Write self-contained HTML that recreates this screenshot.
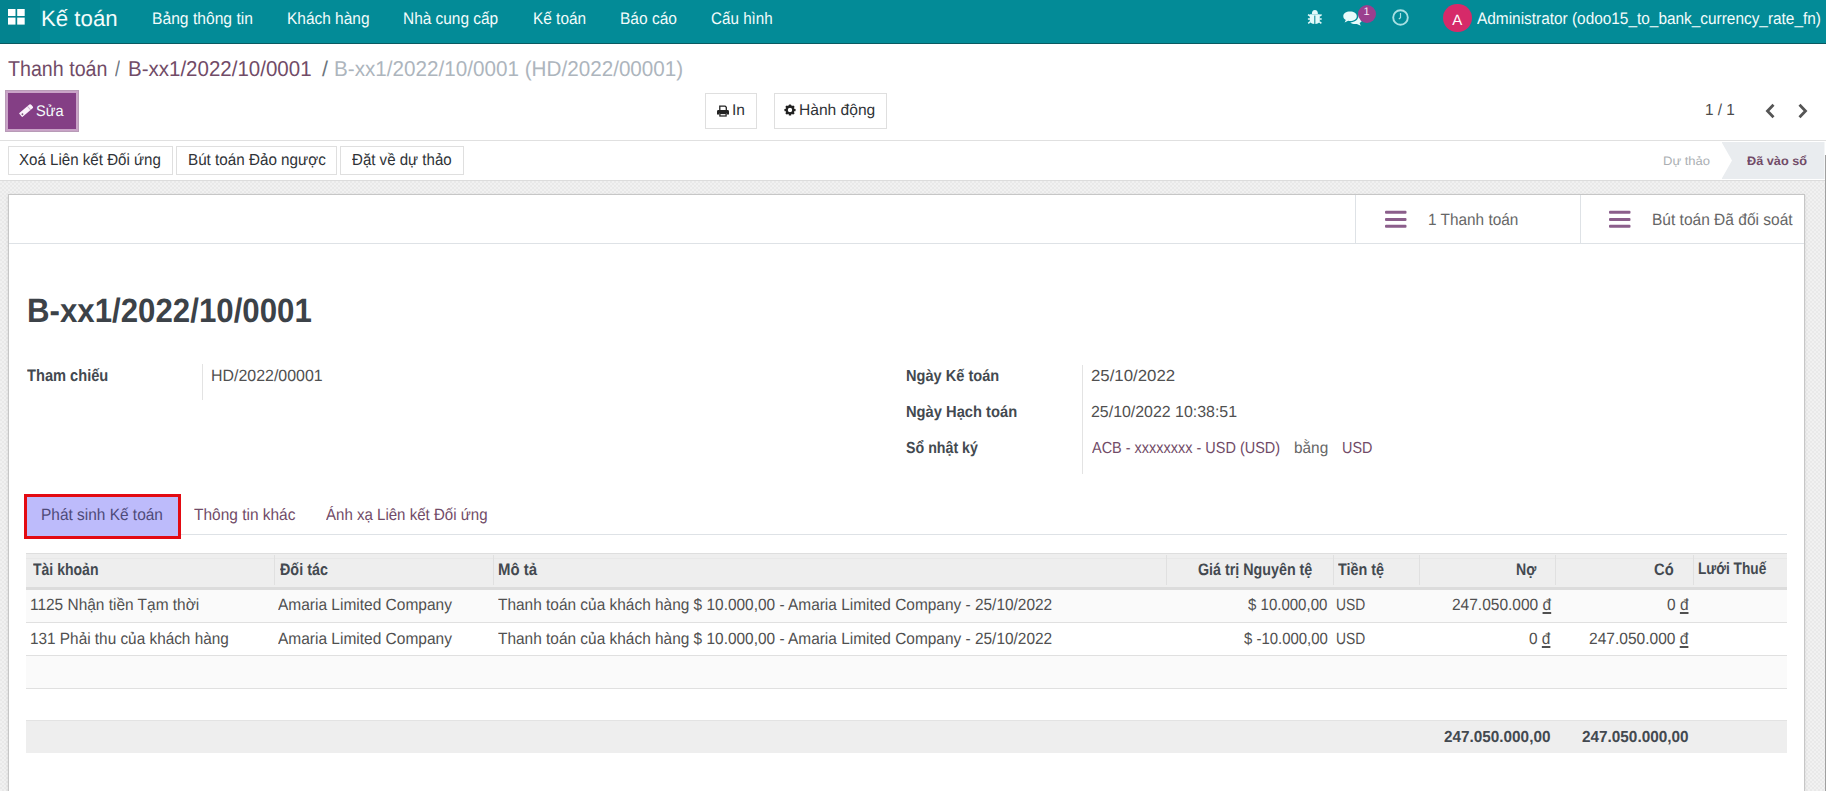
<!DOCTYPE html>
<html><head><meta charset="utf-8">
<style>
*{margin:0;padding:0;box-sizing:border-box}
html,body{width:1826px;height:791px;overflow:hidden;background:#fff;font-family:"Liberation Sans",sans-serif;color:#4c4c4c}
.a{position:absolute;white-space:nowrap;line-height:1;transform-origin:0 0;text-rendering:geometricPrecision}
.b{position:absolute}
.btn{position:absolute;border:1px solid #dfdfdf;background:#fff}
.bgpat{position:absolute;left:0;top:181px;width:1826px;height:610px;background-color:#f1f1f1;
 background-image:linear-gradient(45deg,#e9e9e9 25%,transparent 25%,transparent 75%,#e9e9e9 75%),linear-gradient(45deg,#e9e9e9 25%,transparent 25%,transparent 75%,#e9e9e9 75%);
 background-size:4px 4px;background-position:0 0,2px 2px}
</style></head><body>

<!-- NAVBAR -->
<div class="b" style="left:0;top:0;width:1826px;height:43px;background:#038b97"></div>
<div class="b" style="left:0;top:43px;width:1826px;height:1px;background:#0a5a61"></div>
<div class="b" style="left:0;top:0;width:40px;height:43px;background:#03838f"></div>
<svg class="b" style="left:8px;top:9px" width="17" height="16" viewBox="0 0 17 16"><rect x="0" y="0" width="7.5" height="7" fill="#fff"/><rect x="9.2" y="0" width="7.5" height="7" fill="#fff"/><rect x="0" y="8.6" width="7.5" height="7" fill="#fff"/><rect x="9.2" y="8.6" width="7.5" height="7" fill="#fff"/></svg>
<!-- bug -->
<svg class="b" style="left:1304px;top:6px" width="22" height="22" viewBox="0 0 22 22">
 <path d="M7.9 7.9 Q7.9 4.1 10.9 4.1 Q13.9 4.1 13.9 7.9 Z" fill="#e4fafa"/>
 <path d="M5.8 8.3 H15.8 V14.2 Q15.8 17.9 10.8 17.9 Q5.8 17.9 5.8 14.2 Z" fill="#e4fafa"/>
 <rect x="10.25" y="9.6" width="1.1" height="8.4" fill="#128e98"/>
 <path d="M4 8.6 L6.2 10 M17.6 8.6 L15.4 10 M3.9 12.9 H6 M17.7 12.9 H15.6 M4.2 17.4 L6.4 15.6 M17.4 17.4 L15.2 15.6" stroke="#e4fafa" stroke-width="1.5"/>
</svg>
<!-- comments -->
<svg class="b" style="left:1342.5px;top:10.5px" width="20" height="15" viewBox="0 0 20 15">
 <path d="M7 0.5 C3 0.5 0.3 2.6 0.3 5.2 C0.3 6.8 1.3 8.1 2.8 9 L1.6 11.6 L5.2 9.8 C5.8 9.9 6.4 10 7 10 C11 10 13.8 7.9 13.8 5.2 C13.8 2.6 11 0.5 7 0.5Z" fill="#e8fbfb"/>
 <path d="M15 4.3 C15.2 4.6 15.3 5 15.3 5.3 C15.3 8.7 11.9 11.3 7.3 11.4 C8.5 12.5 10.3 13.1 12.3 13.1 C12.9 13.1 13.4 13 13.9 12.9 L17.8 14.7 L16.6 12 C18.3 11.1 19.4 9.7 19.4 8.1 C19.4 6.5 17.6 5 15 4.3Z" fill="#e8fbfb"/>
</svg>
<div class="b" style="left:1357.5px;top:4.5px;width:18px;height:18px;border-radius:50%;background:#9a3f8e"></div>
<div class="a" style="left:1363.6px;top:6.6px;font-size:11px;color:#fbe9f7">1</div>
<!-- clock -->
<svg class="b" style="left:1392px;top:9px" width="17" height="17" viewBox="0 0 17 17">
 <circle cx="8.5" cy="8.5" r="7.3" fill="none" stroke="#a8e0e3" stroke-width="1.9"/>
 <path d="M8.5 4 V8.8 L6.8 10" fill="none" stroke="#a8e0e3" stroke-width="1.2"/>
</svg>
<!-- avatar -->
<div class="b" style="left:1443.3px;top:4.2px;width:28.5px;height:28px;border-radius:50%;background:#d62a69"></div>
<div class="a" style="left:1452.3px;top:12.6px;font-size:15px;color:#fff">A</div>

<!-- SỬA -->
<div class="b" style="left:5px;top:89.7px;width:74px;height:42px;background:#c9a3c7;border:0.6px solid #b89bb7"></div>
<div class="b" style="left:8px;top:93px;width:68px;height:36px;background:#843f85"></div>
<svg class="b" style="left:14px;top:98px" width="24" height="24" viewBox="0 0 24 24">
 <g transform="translate(12.2,12.5) rotate(-40.3)">
  <path d="M-7.4 -2 Q-7.4 -2.5 -6.8 -2.5 H6.3 Q7.6 -2.5 7.6 -1.2 V1.2 Q7.6 2.5 6.3 2.5 H-6.8 Q-7.4 2.5 -7.4 2 Z" fill="#fbf1fb"/>
  <rect x="3.3" y="-2.5" width="0.9" height="5" fill="#c7a9c7"/>
  <circle cx="-5.3" cy="0.4" r="0.95" fill="#7a5a7a"/>
 </g>
</svg>

<!-- In / Hành động -->
<div class="btn" style="left:705px;top:93px;width:52px;height:36px"></div>
<svg class="b" style="left:717px;top:104.5px" width="13" height="12" viewBox="0 0 13 12">
 <path d="M2.8 5.2 V1.05 H8.1 L9.3 2.25 V5.2" fill="none" stroke="#222" stroke-width="1.3"/>
 <path d="M1.4 5 H10.6 Q12 5 12 6.4 V9.4 H9.7 V8.1 H2.3 V9.4 H0 V6.4 Q0 5 1.4 5Z" fill="#222"/>
 <rect x="2.9" y="8.5" width="6.2" height="2.5" fill="none" stroke="#222" stroke-width="1.25"/>
</svg>
<div class="btn" style="left:773.5px;top:93px;width:113px;height:36px"></div>
<svg class="b" style="left:784px;top:104.3px" width="12" height="12" viewBox="-6 -6 12 12">
 <g fill="#222"><rect x="-1.3" y="-5.6" width="2.6" height="3" rx="0.9" transform="rotate(0)"/><rect x="-1.3" y="-5.6" width="2.6" height="3" rx="0.9" transform="rotate(45)"/><rect x="-1.3" y="-5.6" width="2.6" height="3" rx="0.9" transform="rotate(90)"/><rect x="-1.3" y="-5.6" width="2.6" height="3" rx="0.9" transform="rotate(135)"/><rect x="-1.3" y="-5.6" width="2.6" height="3" rx="0.9" transform="rotate(180)"/><rect x="-1.3" y="-5.6" width="2.6" height="3" rx="0.9" transform="rotate(225)"/><rect x="-1.3" y="-5.6" width="2.6" height="3" rx="0.9" transform="rotate(270)"/><rect x="-1.3" y="-5.6" width="2.6" height="3" rx="0.9" transform="rotate(315)"/></g>
 <circle cx="0" cy="0" r="3.3" fill="none" stroke="#222" stroke-width="2.2"/>
</svg>

<!-- pager arrows -->
<svg class="b" style="left:1764px;top:103px" width="12" height="16" viewBox="0 0 12 16">
 <path d="M9.5 1.8 L3.5 8 L9.5 14.2" fill="none" stroke="#555" stroke-width="2.8"/>
</svg>
<svg class="b" style="left:1797px;top:103px" width="12" height="16" viewBox="0 0 12 16">
 <path d="M2.5 1.8 L8.5 8 L2.5 14.2" fill="none" stroke="#555" stroke-width="2.8"/>
</svg>

<div class="b" style="left:0;top:140px;width:1826px;height:1px;background:#e0e0e0"></div>

<!-- STATUS BAR -->
<div class="btn" style="left:8px;top:146px;width:165px;height:29px"></div>
<div class="btn" style="left:176px;top:146px;width:161px;height:29px"></div>
<div class="btn" style="left:340px;top:146px;width:124px;height:29px"></div>
<div class="b" style="left:1721.5px;top:142px;width:103px;height:37px;background:#e9ecef;clip-path:polygon(0 0,100% 0,100% 100%,0 100%,10.5px 50%)"></div>
<div class="b" style="left:0;top:180px;width:1826px;height:1px;background:#dcdcdc"></div>

<div class="bgpat"></div>
<div class="b" style="left:1824.6px;top:155px;width:1.4px;height:636px;background:#a0a0a0"></div>

<!-- SHEET -->
<div class="b" style="left:8px;top:194px;width:1797px;height:620px;background:#fff;border:1px solid #c6c6c6;box-shadow:0 1px 3px rgba(0,0,0,.1)"></div>
<!-- button box -->
<div class="b" style="left:9px;top:243px;width:1795px;height:1px;background:#dee2e6"></div>
<div class="b" style="left:1355px;top:195px;width:1px;height:48px;background:#dee2e6"></div>
<div class="b" style="left:1580px;top:195px;width:1px;height:48px;background:#dee2e6"></div>
<svg class="b" style="left:1384.6px;top:210px" width="22" height="18" viewBox="0 0 22 18"><rect x="0" y="0.8" width="21.5" height="3" rx="1" fill="#8b5e8b"/><rect x="0" y="8" width="21.5" height="3" rx="1" fill="#8b5e8b"/><rect x="0" y="14.8" width="21.5" height="3" rx="1" fill="#8b5e8b"/></svg>
<svg class="b" style="left:1609.3px;top:210px" width="22" height="18" viewBox="0 0 22 18"><rect x="0" y="0.8" width="21.5" height="3" rx="1" fill="#8b5e8b"/><rect x="0" y="8" width="21.5" height="3" rx="1" fill="#8b5e8b"/><rect x="0" y="14.8" width="21.5" height="3" rx="1" fill="#8b5e8b"/></svg>

<!-- field separators -->
<div class="b" style="left:202px;top:364px;width:1px;height:36px;background:#e3e3e3"></div>
<div class="b" style="left:1082px;top:364.5px;width:1px;height:109.5px;background:#e3e3e3"></div>

<!-- tabs -->
<div class="b" style="left:180px;top:534px;width:1606.5px;height:1px;background:#dee2e6"></div>
<div class="b" style="left:24px;top:493.8px;width:156.5px;height:45.2px;background:#bdbbfb;border:3px solid #e30a12"></div>

<!-- table -->
<div class="b" style="left:26px;top:553px;width:1760.5px;height:36px;background:#eeeeee;border-top:1px solid #dedede"></div>
<div class="b" style="left:26px;top:557.5px;width:1760.5px;height:1px;background:#e8e8e8"></div>
<div class="b" style="left:26px;top:586.8px;width:1760.5px;height:2.8px;background:#dcdcdc"></div>
<div class="b" style="left:273.5px;top:555px;width:1px;height:30px;background:#e0e0e0"></div>
<div class="b" style="left:493.3px;top:555px;width:1px;height:30px;background:#e0e0e0"></div>
<div class="b" style="left:1166px;top:555px;width:1px;height:30px;background:#e0e0e0"></div>
<div class="b" style="left:1333px;top:555px;width:1px;height:30px;background:#e0e0e0"></div>
<div class="b" style="left:1418.5px;top:555px;width:1px;height:30px;background:#e0e0e0"></div>
<div class="b" style="left:1555px;top:555px;width:1px;height:30px;background:#e0e0e0"></div>
<div class="b" style="left:1693px;top:555px;width:1px;height:30px;background:#e0e0e0"></div>
<div class="b" style="left:26px;top:589.6px;width:1760.5px;height:32.6px;background:#fafafa"></div>
<div class="b" style="left:26px;top:622px;width:1760.5px;height:1px;background:#e0e0e0"></div>
<div class="b" style="left:26px;top:655.2px;width:1760.5px;height:1px;background:#e0e0e0"></div>
<div class="b" style="left:26px;top:656.2px;width:1760.5px;height:32px;background:#fafafa"></div>
<div class="b" style="left:26px;top:688.2px;width:1760.5px;height:1px;background:#e0e0e0"></div>
<div class="b" style="left:26px;top:720px;width:1760.5px;height:33px;background:#eeeeee;border-top:1px solid #e3e3e3"></div>

<div class="a" style="left:41.00px;top:7.50px;font-size:22.24px;font-weight:normal;color:#f4fcfc;">Kế toán</div>
<div class="a" style="left:151.66px;top:10.59px;font-size:16.72px;font-weight:normal;color:#f4fcfc;transform:scaleX(0.9368);">Bảng thông tin</div>
<div class="a" style="left:286.87px;top:10.59px;font-size:16.72px;font-weight:normal;color:#f4fcfc;transform:scaleX(0.9253);">Khách hàng</div>
<div class="a" style="left:403.38px;top:10.59px;font-size:16.72px;font-weight:normal;color:#f4fcfc;transform:scaleX(0.9235);">Nhà cung cấp</div>
<div class="a" style="left:533.08px;top:10.59px;font-size:16.72px;font-weight:normal;color:#f4fcfc;transform:scaleX(0.9214);">Kế toán</div>
<div class="a" style="left:620.47px;top:10.59px;font-size:16.72px;font-weight:normal;color:#f4fcfc;transform:scaleX(0.9300);">Báo cáo</div>
<div class="a" style="left:711.49px;top:10.59px;font-size:16.72px;font-weight:normal;color:#f4fcfc;transform:scaleX(0.9106);">Cấu hình</div>
<div class="a" style="left:1477.40px;top:10.59px;font-size:16.72px;font-weight:normal;color:#f4fcfc;transform:scaleX(0.9215);">Administrator (odoo15_to_bank_currency_rate_fn)</div>
<div class="a" style="left:7.69px;top:58.52px;font-size:21.51px;font-weight:normal;color:#714b67;transform:scaleX(0.9140);">Thanh toán</div>
<div class="a" style="left:115.00px;top:58.52px;font-size:21.51px;font-weight:normal;color:#6c757d;transform:scaleX(0.8333);">/</div>
<div class="a" style="left:128.39px;top:58.52px;font-size:21.51px;font-weight:normal;color:#714b67;transform:scaleX(0.9537);">B-xx1/2022/10/0001</div>
<div class="a" style="left:322.00px;top:58.52px;font-size:21.51px;font-weight:normal;color:#6c757d;">/</div>
<div class="a" style="left:334.08px;top:58.52px;font-size:21.51px;font-weight:normal;color:#adb5bd;transform:scaleX(0.9611);">B-xx1/2022/10/0001 (HD/2022/00001)</div>
<div class="a" style="left:35.96px;top:103.70px;font-size:15.41px;font-weight:normal;color:#f4fcfc;transform:scaleX(0.9429);">Sửa</div>
<div class="a" style="left:732.00px;top:103.38px;font-size:15.55px;font-weight:normal;color:#2f3337;">In</div>
<div class="a" style="left:798.80px;top:103.38px;font-size:15.55px;font-weight:normal;color:#2f3337;transform:scaleX(1.0027);">Hành động</div>
<div class="a" style="left:1704.64px;top:103.41px;font-size:15.99px;font-weight:normal;color:#4c4c4c;transform:scaleX(0.9600);">1 / 1</div>
<div class="a" style="left:19.06px;top:152.09px;font-size:16.13px;font-weight:normal;color:#2f3337;transform:scaleX(0.9373);">Xoá Liên kết Đối ứng</div>
<div class="a" style="left:187.65px;top:152.09px;font-size:16.13px;font-weight:normal;color:#2f3337;transform:scaleX(0.9451);">Bút toán Đảo ngược</div>
<div class="a" style="left:352.20px;top:152.09px;font-size:16.13px;font-weight:normal;color:#2f3337;transform:scaleX(0.9349);">Đặt về dự thảo</div>
<div class="a" style="left:1663.43px;top:155.02px;font-size:12.21px;font-weight:normal;color:#abafb3;transform:scaleX(1.0674);">Dự thảo</div>
<div class="a" style="left:1746.50px;top:155.02px;font-size:12.21px;font-weight:bold;color:#714b67;transform:scaleX(1.0404);">Đã vào sổ</div>
<div class="a" style="left:1427.65px;top:212.16px;font-size:16.28px;font-weight:normal;color:#666666;transform:scaleX(0.9457);">1 Thanh toán</div>
<div class="a" style="left:1651.75px;top:212.16px;font-size:16.28px;font-weight:normal;color:#666666;transform:scaleX(0.9541);">Bút toán Đã đối soát</div>
<div class="a" style="left:26.55px;top:294.94px;font-size:33.72px;font-weight:bold;color:#3c4248;transform:scaleX(0.9262);">B-xx1/2022/10/0001</div>
<div class="a" style="left:27.20px;top:367.72px;font-size:16.57px;font-weight:bold;color:#434950;transform:scaleX(0.8835);">Tham chiếu</div>
<div class="a" style="left:211.42px;top:367.96px;font-size:16.28px;font-weight:normal;color:#505050;transform:scaleX(0.9795);">HD/2022/00001</div>
<div class="a" style="left:906.09px;top:369.41px;font-size:15.99px;font-weight:bold;color:#434950;transform:scaleX(0.9120);">Ngày Kế toán</div>
<div class="a" style="left:906.08px;top:405.41px;font-size:15.99px;font-weight:bold;color:#434950;transform:scaleX(0.9202);">Ngày Hạch toán</div>
<div class="a" style="left:906.11px;top:441.41px;font-size:15.99px;font-weight:bold;color:#434950;transform:scaleX(0.8900);">Sổ nhật ký</div>
<div class="a" style="left:1090.95px;top:369.41px;font-size:15.99px;font-weight:normal;color:#505050;transform:scaleX(1.0513);">25/10/2022</div>
<div class="a" style="left:1091.00px;top:405.41px;font-size:15.99px;font-weight:normal;color:#505050;transform:scaleX(0.9959);">25/10/2022 10:38:51</div>
<div class="a" style="left:1092.00px;top:441.41px;font-size:15.99px;font-weight:normal;color:#714b67;transform:scaleX(0.9053);">ACB - xxxxxxxx - USD (USD)</div>
<div class="a" style="left:1294.34px;top:441.41px;font-size:15.99px;font-weight:normal;color:#666666;transform:scaleX(0.9618);">bằng</div>
<div class="a" style="left:1342.30px;top:441.41px;font-size:15.99px;font-weight:normal;color:#714b67;transform:scaleX(0.9000);">USD</div>
<div class="a" style="left:41.45px;top:506.96px;font-size:16.28px;font-weight:normal;color:#4e4a78;transform:scaleX(0.9492);">Phát sinh Kế toán</div>
<div class="a" style="left:193.50px;top:506.96px;font-size:16.28px;font-weight:normal;color:#714b67;transform:scaleX(0.9509);">Thông tin khác</div>
<div class="a" style="left:325.80px;top:506.96px;font-size:16.28px;font-weight:normal;color:#714b67;transform:scaleX(0.9253);">Ánh xạ Liên kết Đối ứng</div>
<div class="a" style="left:32.80px;top:562.12px;font-size:16.57px;font-weight:bold;color:#434950;transform:scaleX(0.8468);">Tài khoản</div>
<div class="a" style="left:280.00px;top:562.12px;font-size:16.57px;font-weight:bold;color:#434950;transform:scaleX(0.8673);">Đối tác</div>
<div class="a" style="left:497.80px;top:562.12px;font-size:16.57px;font-weight:bold;color:#434950;transform:scaleX(0.9023);">Mô tả</div>
<div class="a" style="left:1198.44px;top:562.12px;font-size:16.57px;font-weight:bold;color:#434950;transform:scaleX(0.8626);">Giá trị Nguyên tệ</div>
<div class="a" style="left:1338.10px;top:562.12px;font-size:16.57px;font-weight:bold;color:#434950;transform:scaleX(0.8679);">Tiền tệ</div>
<div class="a" style="left:1515.55px;top:562.12px;font-size:16.57px;font-weight:bold;color:#434950;transform:scaleX(0.8522);">Nợ</div>
<div class="a" style="left:1653.61px;top:562.12px;font-size:16.57px;font-weight:bold;color:#434950;transform:scaleX(0.8905);">Có</div>
<div class="a" style="left:1698.07px;top:560.92px;font-size:16.57px;font-weight:bold;color:#434950;transform:scaleX(0.8256);">Lưới Thuế</div>
<div class="a" style="left:30.45px;top:597.16px;font-size:16.28px;font-weight:normal;color:#505050;transform:scaleX(0.9494);">1125 Nhận tiền Tạm thời</div>
<div class="a" style="left:278.40px;top:597.16px;font-size:16.28px;font-weight:normal;color:#505050;transform:scaleX(0.9522);">Amaria Limited Company</div>
<div class="a" style="left:498.00px;top:597.16px;font-size:16.28px;font-weight:normal;color:#505050;transform:scaleX(0.9487);">Thanh toán của khách hàng $ 10.000,00 - Amaria Limited Company - 25/10/2022</div>
<div class="a" style="left:1247.70px;top:597.16px;font-size:16.28px;font-weight:normal;color:#505050;transform:scaleX(0.9233);">$ 10.000,00</div>
<div class="a" style="left:1335.95px;top:597.16px;font-size:16.28px;font-weight:normal;color:#505050;transform:scaleX(0.8515);">USD</div>
<div class="a" style="left:1451.65px;top:597.16px;font-size:16.28px;font-weight:normal;color:#505050;transform:scaleX(0.9534);">247.050.000 <u style="text-decoration-thickness:1.5px;text-underline-offset:1.5px">đ</u></div>
<div class="a" style="left:1666.55px;top:597.16px;font-size:16.28px;font-weight:normal;color:#505050;transform:scaleX(0.9500);">0 <u style="text-decoration-thickness:1.5px;text-underline-offset:1.5px">đ</u></div>
<div class="a" style="left:30.46px;top:630.76px;font-size:16.28px;font-weight:normal;color:#505050;transform:scaleX(0.9435);">131 Phải thu của khách hàng</div>
<div class="a" style="left:278.40px;top:630.76px;font-size:16.28px;font-weight:normal;color:#505050;transform:scaleX(0.9522);">Amaria Limited Company</div>
<div class="a" style="left:498.00px;top:630.76px;font-size:16.28px;font-weight:normal;color:#505050;transform:scaleX(0.9487);">Thanh toán của khách hàng $ 10.000,00 - Amaria Limited Company - 25/10/2022</div>
<div class="a" style="left:1243.60px;top:630.76px;font-size:16.28px;font-weight:normal;color:#505050;transform:scaleX(0.9176);">$ -10.000,00</div>
<div class="a" style="left:1335.95px;top:630.76px;font-size:16.28px;font-weight:normal;color:#505050;transform:scaleX(0.8515);">USD</div>
<div class="a" style="left:1529.05px;top:630.76px;font-size:16.28px;font-weight:normal;color:#505050;transform:scaleX(0.9455);">0 <u style="text-decoration-thickness:1.5px;text-underline-offset:1.5px">đ</u></div>
<div class="a" style="left:1589.04px;top:630.76px;font-size:16.28px;font-weight:normal;color:#505050;transform:scaleX(0.9553);">247.050.000 <u style="text-decoration-thickness:1.5px;text-underline-offset:1.5px">đ</u></div>
<div class="a" style="left:1444.40px;top:730.01px;font-size:15.99px;font-weight:bold;color:#434950;transform:scaleX(0.9577);">247.050.000,00</div>
<div class="a" style="left:1582.00px;top:730.01px;font-size:15.99px;font-weight:bold;color:#434950;transform:scaleX(0.9586);">247.050.000,00</div>

</body></html>
